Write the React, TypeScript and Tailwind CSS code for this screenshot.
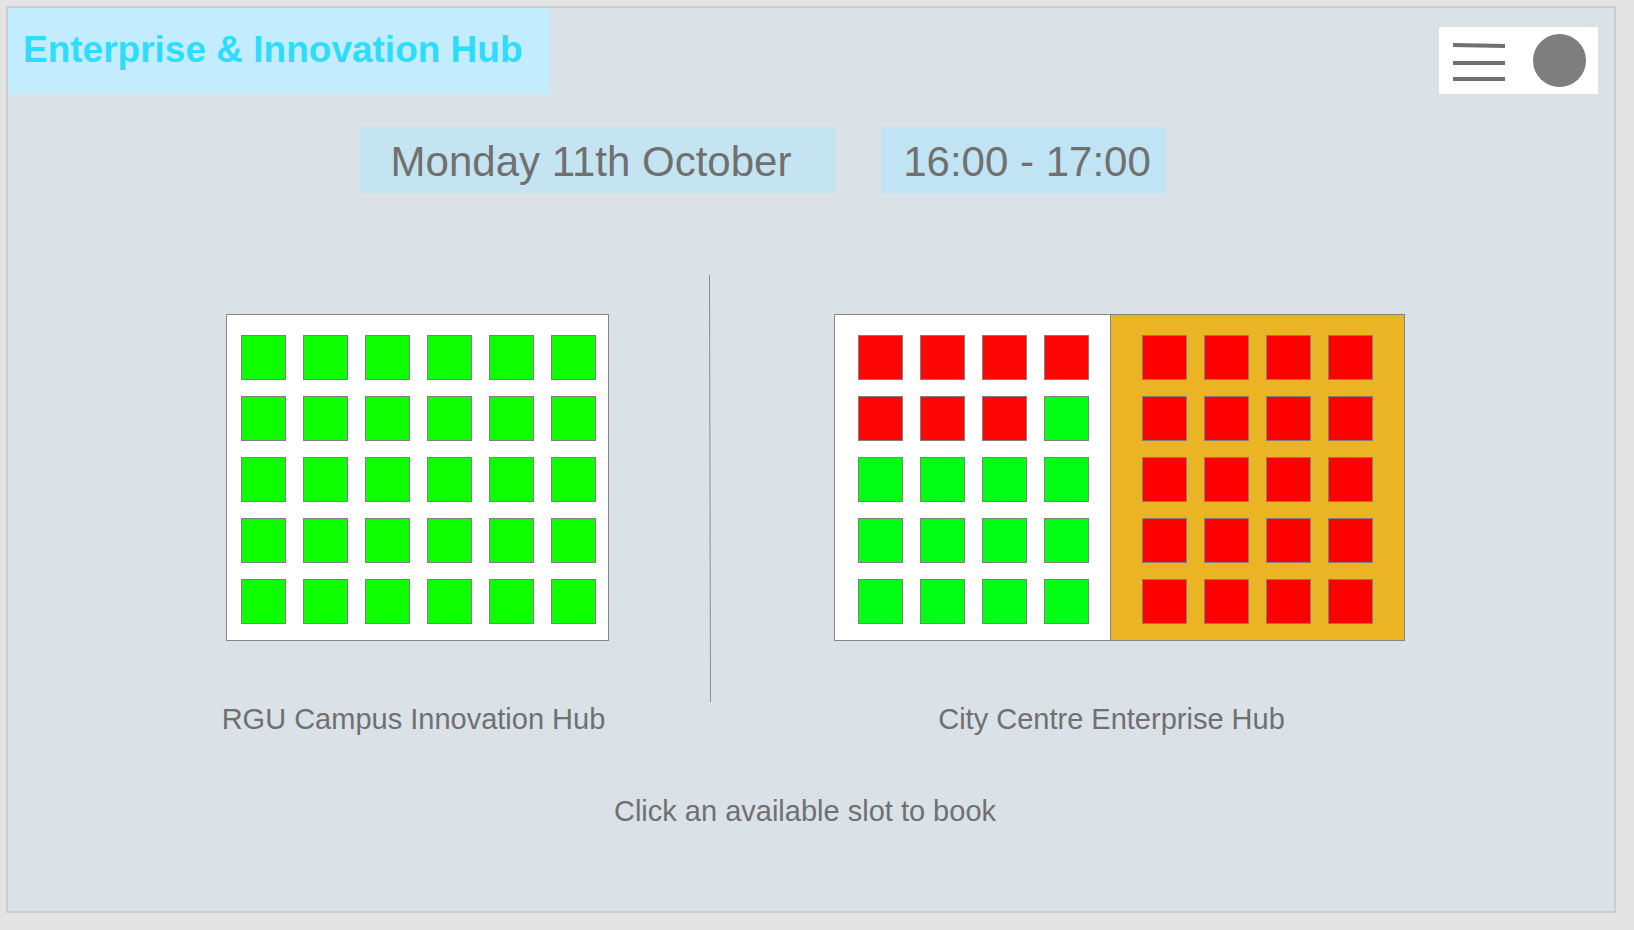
type SlotState = "free" | "taken";

interface Zone {
  name: string;
  columns: string;
  panel: string;
  freeColor: string;
  takenColor: string;
  slots: SlotState[];
}

const fill = (count: number, state: SlotState): SlotState[] =>
  Array.from({ length: count }, () => state);

const campus: Zone = {
  name: "Campus",
  columns: "grid-cols-[repeat(6,45px)]",
  panel: "border bg-white pl-[14px] pr-3",
  freeColor: "bg-[#0dff00]",
  takenColor: "bg-[#ff0606]",
  slots: fill(30, "free"),
};

const cityOpen: Zone = {
  name: "City open area",
  columns: "grid-cols-[repeat(4,45px)]",
  panel: "border bg-white pl-[23px] pr-[21px]",
  freeColor: "bg-[#00ff15]",
  takenColor: "bg-[#ff0606]",
  slots: [...fill(7, "taken"), ...fill(13, "free")],
};

const cityReserved: Zone = {
  name: "City reserved area",
  columns: "grid-cols-[repeat(4,45px)]",
  panel: "border-y border-r bg-[#ebb424] px-[31px]",
  freeColor: "bg-[#00ff15]",
  takenColor: "bg-[#ff0000]",
  slots: fill(20, "taken"),
};

function SlotPanel({ zone }: { zone: Zone }) {
  return (
    <div
      className={`grid gap-x-[17px] gap-y-4 border-[#858585] pt-5 pb-4 ${zone.columns} ${zone.panel}`}
    >
      {zone.slots.map((state, i) => (
        <button
          key={i}
          type="button"
          disabled={state === "taken"}
          aria-label={`${zone.name} slot ${i + 1}, ${state}`}
          className={`h-[45px] border border-[#808080] ${
            state === "free" ? zone.freeColor : zone.takenColor
          }`}
        />
      ))}
    </div>
  );
}

function Header() {
  return (
    <header className="flex items-start justify-between">
      <div className="w-[542px] bg-[#c3edfe] pt-[22px] pb-6 pl-[15px]">
        <h1 className="text-[37px] leading-10 font-bold whitespace-nowrap text-[#2ddcff]">
          Enterprise &amp; Innovation Hub
        </h1>
      </div>
      <div className="mt-[19px] mr-4 flex h-[67px] items-center gap-7 bg-white pr-3 pl-[14px]">
        <button type="button" aria-label="Menu">
          <svg width="52" height="41" viewBox="0 0 52 41" stroke="#707070" strokeWidth="4">
            <path d="M0 5 52 6M0 23H52M0 39H52" />
          </svg>
        </button>
        <button type="button" aria-label="Account" className="size-[53px] rounded-full bg-[#7e7e7e]" />
      </div>
    </header>
  );
}

export default function App() {
  return (
    <div className="flex min-h-screen flex-col bg-[#e4e4e4] pt-1.5 pr-[18px] pb-[17px] pl-1.5 font-['Liberation_Sans',Arial,sans-serif] text-[#707070]">
      <div className="flex-1 border-2 border-[#cdcdcd] bg-[#dae2e8]">
        <Header />
        <main>
          <div className="mt-[33px] flex justify-center gap-[46px] pr-[97px] text-[42px] leading-[62px] whitespace-nowrap">
            <button type="button" className="w-[475px] bg-[#c5e4f1] pt-1 pr-3">
              Monday 11th October
            </button>
            <button type="button" className="w-[285px] bg-[#c0e4f3] pt-1 pl-2">
              16:00 - 17:00
            </button>
          </div>

          <div className="mt-[82px] flex justify-center pl-[9px] text-[29px] leading-8">
            <section className="mt-[39px] flex flex-col items-center">
              <SlotPanel zone={campus} />
              <h2 className="-mx-4 mt-[62px] pr-2 whitespace-nowrap">RGU Campus Innovation Hub</h2>
            </section>
            <svg width="4" height="427" viewBox="0 0 4 427" className="mr-[122px] ml-[99px]">
              <path d="M1.5 0 2.5 427" stroke="#8a8f91" />
            </svg>
            <section className="mt-[39px] flex flex-col items-center">
              <div className="flex">
                <SlotPanel zone={cityOpen} />
                <SlotPanel zone={cityReserved} />
              </div>
              <h2 className="mt-[62px] pr-4 whitespace-nowrap">City Centre Enterprise Hub</h2>
            </section>
          </div>

          <p className="mt-[60px] pr-3 text-center text-[29px] leading-8">
            Click an available slot to book
          </p>
        </main>
      </div>
    </div>
  );
}
